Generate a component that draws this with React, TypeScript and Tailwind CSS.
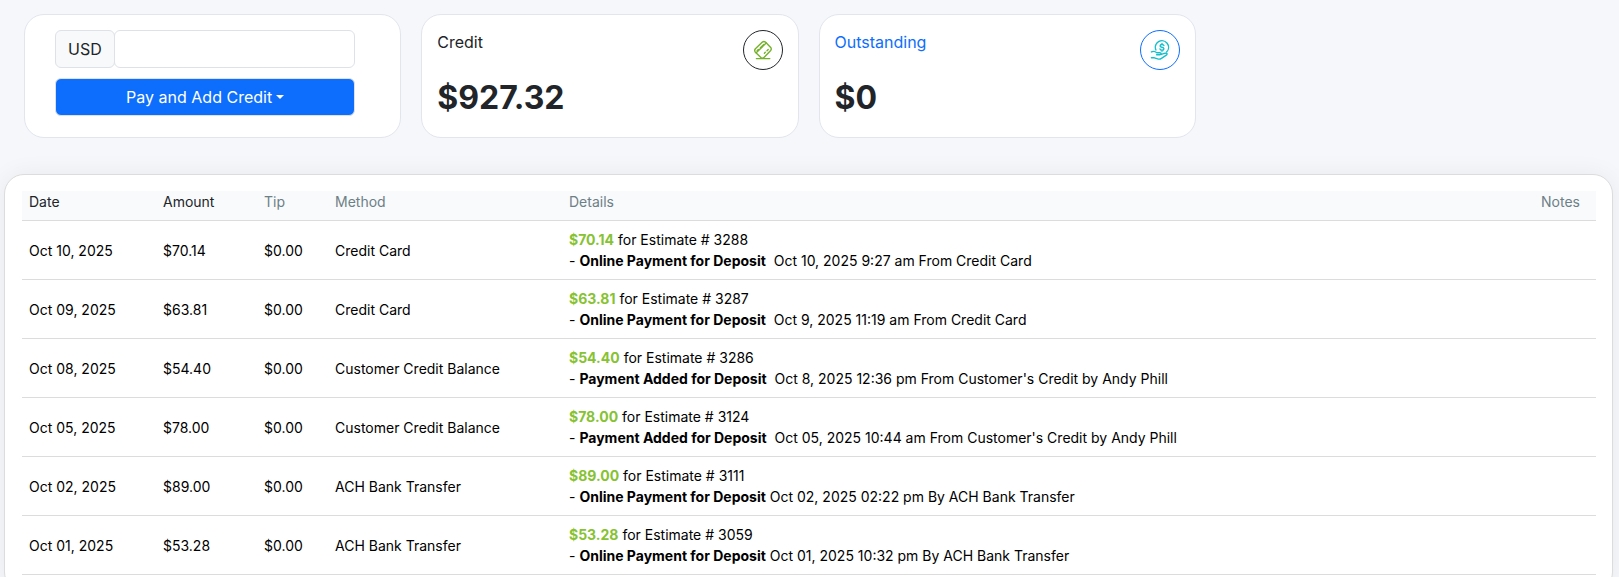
import type { ReactNode } from "react";

type Payment = {
  date: string;
  amount: string;
  tip: string;
  method: string;
  estimate: string;
  label: string;
  note: string;
};

const payments: Payment[] = [
  { date: "Oct 10, 2025", amount: "$70.14", tip: "$0.00", method: "Credit Card", estimate: "3288", label: "Online Payment for Deposit", note: "\u00a0 Oct 10, 2025 9:27 am From Credit Card" },
  { date: "Oct 09, 2025", amount: "$63.81", tip: "$0.00", method: "Credit Card", estimate: "3287", label: "Online Payment for Deposit", note: "\u00a0 Oct 9, 2025 11:19 am From Credit Card" },
  { date: "Oct 08, 2025", amount: "$54.40", tip: "$0.00", method: "Customer Credit Balance", estimate: "3286", label: "Payment Added for Deposit", note: "\u00a0 Oct 8, 2025 12:36 pm From Customer's Credit by Andy Phill" },
  { date: "Oct 05, 2025", amount: "$78.00", tip: "$0.00", method: "Customer Credit Balance", estimate: "3124", label: "Payment Added for Deposit", note: "\u00a0 Oct 05, 2025 10:44 am From Customer's Credit by Andy Phill" },
  { date: "Oct 02, 2025", amount: "$89.00", tip: "$0.00", method: "ACH Bank Transfer", estimate: "3111", label: "Online Payment for Deposit", note: " Oct 02, 2025 02:22 pm By ACH Bank Transfer" },
  { date: "Oct 01, 2025", amount: "$53.28", tip: "$0.00", method: "ACH Bank Transfer", estimate: "3059", label: "Online Payment for Deposit", note: " Oct 01, 2025 10:32 pm By ACH Bank Transfer" },
];

function CardIcon() {
  return (
    <svg viewBox="0 0 20 20" className="size-5" fill="none" stroke="#76b12c" strokeWidth="1.4" strokeLinecap="round" strokeLinejoin="round" aria-hidden="true">
      <path d="M2.4 8.7 9.4 2.1Q10.9 1 12.4 2.1L17.7 7.4Q18.8 8.9 17.7 10.4L11.2 17.3Q9.7 18.9 7.9 17.5L2.4 12.2Q1 10.4 2.4 8.7Z" />
      <path d="M3.2 12.8 13.2 3M7.4 7.8 10.8 4.5M4.2 10.6 5.4 9.5" />
      <path d="M11.4 13.2 12.3 12.3M14 10.7 15.2 9.5" />
      <path d="M3.4 18.6H16.8" />
    </svg>
  );
}

function HandCoinIcon() {
  return (
    <svg viewBox="0 0 20 20" className="size-5" fill="none" stroke="#14bfcb" strokeWidth="1.4" strokeLinecap="round" strokeLinejoin="round" aria-hidden="true">
      <path d="M5.9 10A6.6 6.6 0 1 1 16.6 12" />
      <path d="M13.9 5.6C13.6 4.8 12.9 4.5 12 4.5 10.9 4.5 10.1 5 10.1 5.9 10.1 7.7 13.9 6.7 13.9 8.7 13.9 9.7 13.1 10.2 12 10.2 11 10.2 10.3 9.8 10 9M12 3.4V4.5M12 10.2V11.3" />
      <path d="M1.4 11.9C3.5 11 5.2 11.3 6.8 12.8H9.8C11.6 12.8 11.5 14.8 9.8 14.8H6.6" />
      <path d="M11.2 14.3 15.2 13.2C17.1 12.8 17.7 14.2 16.3 15.2L11.5 18.3C10.2 19.2 9 19.3 7.6 18.8L4.4 17.8H1.4" />
    </svg>
  );
}

function StatCard({ title, value, icon, accent }: { title: string; value: string; icon: ReactNode; accent: string }) {
  return (
    <section className="rounded-[20px] border border-[#e2e5ed] bg-white p-[15px]">
      <div className="flex items-start justify-between">
        <h2 className={`text-base ${accent}`}>{title}</h2>
        <span className={`flex size-10 items-center justify-center rounded-full border border-current ${accent}`}>{icon}</span>
      </div>
      <p className="mt-2 text-[32px] leading-10 font-bold">{value}</p>
    </section>
  );
}

export default function App() {
  return (
    <main className="min-h-screen bg-[#f5f7fb] pt-3.5 font-['Inter',sans-serif] text-[#212529]">
      <div className="grid grid-cols-4 gap-5 pr-[26px] pl-6">
        <form className="rounded-[20px] border border-[#e2e5ed] bg-white pt-[15px] pr-[45px] pb-[21px] pl-[30px]">
          <div className="flex">
            <label htmlFor="amount" className="rounded-md border border-[#dee2e6] bg-[#f8f9fa] px-3 py-1.5">
              USD
            </label>
            <input id="amount" type="text" className="-ml-px h-[38px] min-w-0 flex-1 rounded-md border border-[#dee2e6] bg-white px-3" />
          </div>
          <button type="button" className="mt-2.5 flex h-[38px] w-full items-center justify-center gap-1 rounded-md border border-[#dee2e6] bg-[#0d6efd] text-white">
            Pay and Add Credit
            <svg viewBox="0 0 8 4" className="h-1 w-2" fill="currentColor" aria-hidden="true">
              <path d="M0 0H8L4 4Z" />
            </svg>
          </button>
        </form>
        <StatCard title="Credit" value="$927.32" icon={<CardIcon />} accent="text-[#212529]" />
        <StatCard title="Outstanding" value="$0" icon={<HandCoinIcon />} accent="text-[#0d6efd]" />
      </div>

      <section className="mt-9 mr-1.5 ml-1 rounded-[20px] border border-[#dcdcdc] bg-white p-4 pl-[17px] shadow-[0_0_25px_rgba(0,0,0,0.06)]">
        <table className="w-full table-fixed border-collapse text-left text-sm leading-[21px] text-black">
          <colgroup>
            <col className="w-[134px]" />
            <col className="w-[101px]" />
            <col className="w-[71px]" />
            <col className="w-[234px]" />
            <col />
            <col className="w-[62px]" />
          </colgroup>
          <thead>
            <tr className="border-b border-[#dcdcdc] bg-[#f9fafc] text-[#6c8086]">
              <th className="px-[7px] pb-2 font-normal text-[#212529]">Date</th>
              <th className="px-[7px] pb-2 font-normal text-[#212529]">Amount</th>
              <th className="px-[7px] pb-2 font-normal">Tip</th>
              <th className="px-[7px] pb-2 font-normal">Method</th>
              <th className="px-[7px] pb-2 font-normal">Details</th>
              <th className="px-[7px] pb-2 font-normal">Notes</th>
            </tr>
          </thead>
          <tbody>
            {payments.map((p) => (
              <tr key={p.estimate} className="border-b border-[#dcdcdc]">
                <td className="px-[7px] py-2">{p.date}</td>
                <td className="px-[7px] py-2">{p.amount}</td>
                <td className="px-[7px] py-2">{p.tip}</td>
                <td className="px-[7px] py-2">{p.method}</td>
                <td className="px-[7px] py-2">
                  <div>
                    <b className="font-bold text-[#86c232]">{p.amount}</b> for Estimate # {p.estimate}
                  </div>
                  <div>
                    - <b className="font-bold">{p.label}</b>
                    {p.note}
                  </div>
                </td>
                <td className="px-[7px] py-2" />
              </tr>
            ))}
          </tbody>
        </table>
      </section>
    </main>
  );
}
